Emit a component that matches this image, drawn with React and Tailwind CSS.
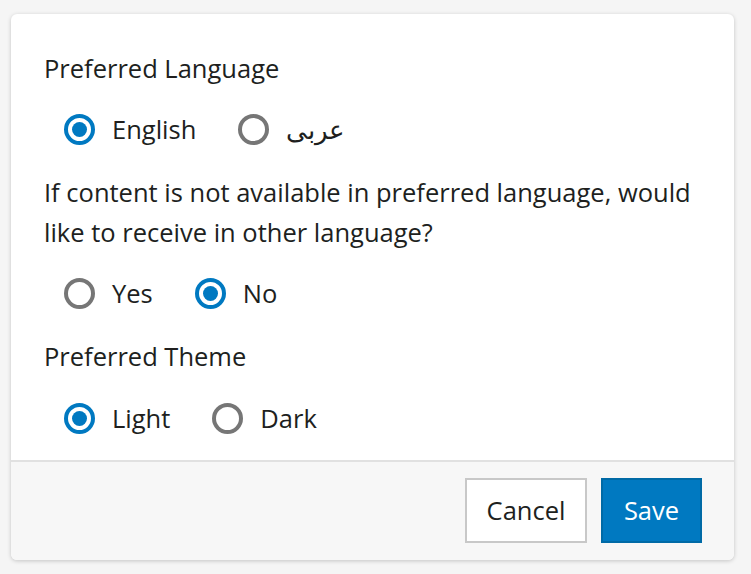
const Radio = ({ checked, label, rtl }) => (
    <label className="flex items-center gap-[17px] cursor-pointer">
        <span
            className={
                checked
                    ? "w-[31px] h-[31px] rounded-full border-[4px] border-[#0079c1] flex items-center justify-center"
                    : "w-[31px] h-[31px] rounded-full border-[4px] border-[#767676]"
            }
        >
            {checked && <span className="w-[15px] h-[15px] rounded-full bg-[#0079c1]" />}
        </span>
        <span dir={rtl ? "rtl" : undefined} className="text-[25.5px] leading-[40px] text-[#201f1e]">
            {label}
        </span>
    </label>
);

const App = () => {
    return (
        <div className="w-[751px] h-[574px] bg-[#f5f5f5] pt-[14px] pl-[11px] font-['Open_Sans',sans-serif]">
            <div className="w-[723px] h-[546px] bg-white rounded-[6px] shadow-[0_1px_4px_rgba(0,0,0,0.2)] flex flex-col overflow-hidden">
                <div className="flex-1 px-[33px] pt-[34px] text-[#201f1e]">
                    <p className="text-[25.5px] leading-[40px]">Preferred Language</p>
                    <div className="flex items-center gap-[42px] pl-[20px] mt-[21px]">
                        <Radio checked label="English" />
                        <Radio label="عربى" rtl />
                    </div>
                    <p className="text-[25.5px] leading-[40px] mt-[23px] whitespace-nowrap">
                        If content is not available in preferred language, would
                        <br />
                        like to receive in other language?
                    </p>
                    <div className="flex items-center gap-[42px] pl-[20px] mt-[21px]">
                        <Radio label="Yes" />
                        <Radio checked label="No" />
                    </div>
                    <p className="text-[25.5px] leading-[40px] mt-[23px]">Preferred Theme</p>
                    <div className="flex items-center gap-[42px] pl-[20px] mt-[22px]">
                        <Radio checked label="Light" />
                        <Radio label="Dark" />
                    </div>
                </div>
                <div className="h-[100px] bg-[#f7f7f7] border-t-2 border-[#e1e1e1] flex justify-end items-start pt-[16px] pr-[32px] gap-[14px]">
                    <button className="w-[122px] h-[65px] bg-white border-2 border-[#c8c8c8] text-[25.5px] text-[#201f1e]">
                        Cancel
                    </button>
                    <button className="w-[101px] h-[65px] bg-[#0079c1] border-2 border-[#006aa6] text-[25.5px] text-white">
                        Save
                    </button>
                </div>
            </div>
        </div>
    );
};

export default App;
